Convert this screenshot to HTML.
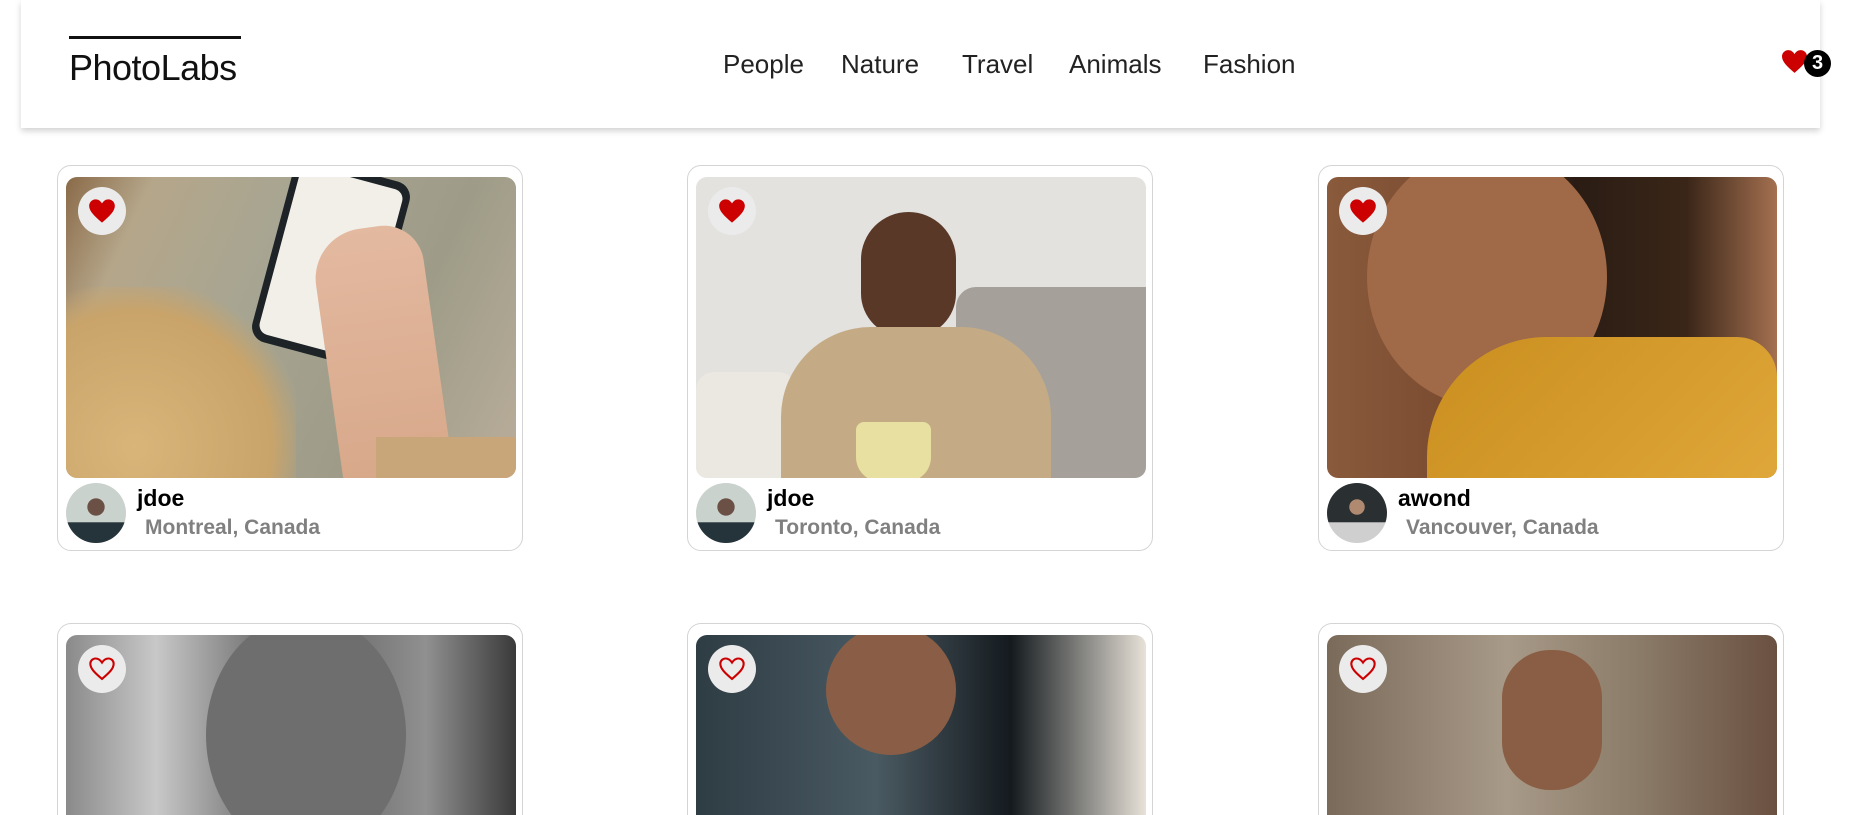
<!DOCTYPE html>
<html><head><meta charset="utf-8"><style>
*{box-sizing:border-box;margin:0;padding:0}
html,body{width:1857px;height:815px;overflow:hidden;background:#fff}
body{font-family:"Segoe UI","Liberation Sans",sans-serif}
#wrap{position:relative;width:1857px;height:815px;overflow:hidden}
.hdr{position:absolute;left:21px;top:0;width:1799px;height:128px;background:#fff;box-shadow:0 3px 6px rgba(0,0,0,.18)}
.logo{position:absolute;left:69px;top:36px;width:172px;border-top:3px solid #111;font-size:36px;color:#111;padding-top:8px;letter-spacing:-0.5px}
.nav{position:absolute;top:47px;font-size:26px;color:#222;line-height:34px}
.fav{position:absolute;left:1780px;top:49px}
.badge{position:absolute;left:1804px;top:50px;width:27px;height:27px;border-radius:50%;background:#000;color:#fff;font-weight:bold;font-size:20px;text-align:center;line-height:27px}
.card{position:absolute;width:466px;height:386px;border:1px solid #d4d4d4;border-radius:14px}
.r2{height:192px;border-bottom:none;border-radius:14px 14px 0 0;overflow:hidden}
.img{position:absolute;left:8px;top:11px;width:450px;height:301px;border-radius:11px;overflow:hidden}
.hb{position:absolute;left:12px;top:10px;width:48px;height:48px;border-radius:50%;background:#ebebeb}
.hb svg{position:absolute;left:10px;top:11px}
.av{position:absolute;left:8px;top:317px;width:60px;height:60px;border-radius:50%;overflow:hidden}
.nm{position:absolute;left:79px;top:319px;font-size:23px;font-weight:bold;color:#000}
.loc{position:absolute;left:87px;top:350px;font-size:21px;font-weight:bold;color:#808080}
</style></head><body><div id="wrap">
<div class="hdr"></div>
<div class="logo">PhotoLabs</div>
<div class="nav" style="left:723px">People</div>
<div class="nav" style="left:841px">Nature</div>
<div class="nav" style="left:962px">Travel</div>
<div class="nav" style="left:1069px">Animals</div>
<div class="nav" style="left:1203px">Fashion</div>
<svg class="fav" width="29" height="25" viewBox="0 0 24 22"><path d="M12 21 C5 15 1 11 1 6.5 C1 3.5 3.5 1 6.5 1 C9 1 10.8 2.5 12 4.5 C13.2 2.5 15 1 17.5 1 C20.5 1 23 3.5 23 6.5 C23 11 19 15 12 21Z" fill="#c00"/></svg>
<div class="badge">3</div>

<div class="card" style="left:57px;top:165px">
 <div class="img" style="background:linear-gradient(115deg,#8a6a48 0%,#b5a68a 15%,#a7a592 40%,#9e9c88 70%,#b9ad9a 100%)">
  <div style="position:absolute;left:0;top:110px;width:230px;height:200px;background:radial-gradient(ellipse at 30% 80%,#d9b57a,#c9a46a 60%,transparent 75%)"></div>
  <div style="position:absolute;left:205px;top:-10px;width:120px;height:190px;background:#1d2326;border-radius:16px;transform:rotate(15deg)"><div style="position:absolute;left:7px;top:8px;right:7px;bottom:8px;background:#f2efe9;border-radius:10px"></div></div>
  <div style="position:absolute;left:260px;top:50px;width:110px;height:250px;background:linear-gradient(180deg,#e3b9a0,#d8a88a);border-radius:50px 40px 0 0;transform:rotate(-8deg)"></div>
  <div style="position:absolute;left:310px;top:260px;width:150px;height:60px;background:#c9a57a"></div>
  <div class="hb"><svg width="28" height="26" viewBox="0 0 24 22"><path d="M12 21 C5 15 1 11 1 6.5 C1 3.5 3.5 1 6.5 1 C9 1 10.8 2.5 12 4.5 C13.2 2.5 15 1 17.5 1 C20.5 1 23 3.5 23 6.5 C23 11 19 15 12 21Z" fill="#c00"/></svg></div>
 </div>
 <div class="av" style="background:radial-gradient(circle at 50% 40%,#6b5045 0 18%,transparent 19%),linear-gradient(180deg,#c9d2cd 0 65%,#25333a 66%)"></div>
 <div class="nm">jdoe</div><div class="loc">Montreal, Canada</div>
</div>

<div class="card" style="left:687px;top:165px">
 <div class="img" style="background:#e3e2de">
  <div style="position:absolute;left:260px;top:110px;width:190px;height:191px;background:#a5a09a;border-radius:20px 0 0 0"></div>
  <div style="position:absolute;left:0;top:195px;width:100px;height:106px;background:#ebe8e2;border-radius:18px 18px 0 0"></div>
  <div style="position:absolute;left:165px;top:35px;width:95px;height:125px;background:#5a3828;border-radius:48px 48px 44px 44px"></div>
  <div style="position:absolute;left:85px;top:150px;width:270px;height:170px;background:#c4ab85;border-radius:90px 90px 0 0"></div>
  <div style="position:absolute;left:160px;top:245px;width:75px;height:60px;background:#e8e0a0;border-radius:8px 8px 25px 25px"></div>
  <div class="hb"><svg width="28" height="26" viewBox="0 0 24 22"><path d="M12 21 C5 15 1 11 1 6.5 C1 3.5 3.5 1 6.5 1 C9 1 10.8 2.5 12 4.5 C13.2 2.5 15 1 17.5 1 C20.5 1 23 3.5 23 6.5 C23 11 19 15 12 21Z" fill="#c00"/></svg></div>
 </div>
 <div class="av" style="background:radial-gradient(circle at 50% 40%,#6b5045 0 18%,transparent 19%),linear-gradient(180deg,#c9d2cd 0 65%,#25333a 66%)"></div>
 <div class="nm">jdoe</div><div class="loc">Toronto, Canada</div>
</div>

<div class="card" style="left:1318px;top:165px">
 <div class="img" style="background:linear-gradient(90deg,#8a5a3c 0%,#7a4a30 30%,#2a1c14 55%,#3a2618 80%,#a47050 100%)">
  <div style="position:absolute;left:40px;top:-30px;width:240px;height:260px;background:#a06a48;border-radius:50%"></div>
  <div style="position:absolute;left:100px;top:160px;width:350px;height:160px;background:linear-gradient(135deg,#c98e1e,#e0a73a);border-radius:120px 40px 0 0"></div>
  <div class="hb"><svg width="28" height="26" viewBox="0 0 24 22"><path d="M12 21 C5 15 1 11 1 6.5 C1 3.5 3.5 1 6.5 1 C9 1 10.8 2.5 12 4.5 C13.2 2.5 15 1 17.5 1 C20.5 1 23 3.5 23 6.5 C23 11 19 15 12 21Z" fill="#c00"/></svg></div>
 </div>
 <div class="av" style="background:radial-gradient(circle at 50% 40%,#b08a70 0 16%,transparent 17%),linear-gradient(180deg,#2a2f32 0 65%,#cfcfcf 66%)"></div>
 <div class="nm">awond</div><div class="loc">Vancouver, Canada</div>
</div>

<div class="card r2" style="left:57px;top:623px">
 <div class="img" style="background:linear-gradient(90deg,#8a8a8a,#c8c8c8 20%,#5a5a5a 50%,#909090 80%,#3a3a3a)">
  <div style="position:absolute;left:140px;top:-20px;width:200px;height:240px;background:#6e6e6e;border-radius:50%"></div>
  <div class="hb"><svg width="28" height="26" viewBox="0 0 24 22"><path d="M12 19.5 C5.5 14 2 10.5 2 6.5 C2 4 4 2 6.5 2 C8.8 2 10.6 3.4 12 5.5 C13.4 3.4 15.2 2 17.5 2 C20 2 22 4 22 6.5 C22 10.5 18.5 14 12 19.5Z" fill="none" stroke="#c00" stroke-width="1.8"/></svg></div>
 </div>
</div>

<div class="card r2" style="left:687px;top:623px">
 <div class="img" style="background:linear-gradient(90deg,#2e3c44,#4a5a62 40%,#141a1e 70%,#e8e2d8 100%)">
  <div style="position:absolute;left:130px;top:-10px;width:130px;height:130px;background:#8a5e46;border-radius:50%"></div>
  <div class="hb"><svg width="28" height="26" viewBox="0 0 24 22"><path d="M12 19.5 C5.5 14 2 10.5 2 6.5 C2 4 4 2 6.5 2 C8.8 2 10.6 3.4 12 5.5 C13.4 3.4 15.2 2 17.5 2 C20 2 22 4 22 6.5 C22 10.5 18.5 14 12 19.5Z" fill="none" stroke="#c00" stroke-width="1.8"/></svg></div>
 </div>
</div>

<div class="card r2" style="left:1318px;top:623px">
 <div class="img" style="background:linear-gradient(90deg,#7a6a5a,#a89a88 40%,#8a7a68 70%,#6a5040 100%)">
  <div style="position:absolute;left:175px;top:15px;width:100px;height:140px;background:#8a5e44;border-radius:48px"></div>
  <div class="hb"><svg width="28" height="26" viewBox="0 0 24 22"><path d="M12 19.5 C5.5 14 2 10.5 2 6.5 C2 4 4 2 6.5 2 C8.8 2 10.6 3.4 12 5.5 C13.4 3.4 15.2 2 17.5 2 C20 2 22 4 22 6.5 C22 10.5 18.5 14 12 19.5Z" fill="none" stroke="#c00" stroke-width="1.8"/></svg></div>
 </div>
</div>
</div></body></html>
